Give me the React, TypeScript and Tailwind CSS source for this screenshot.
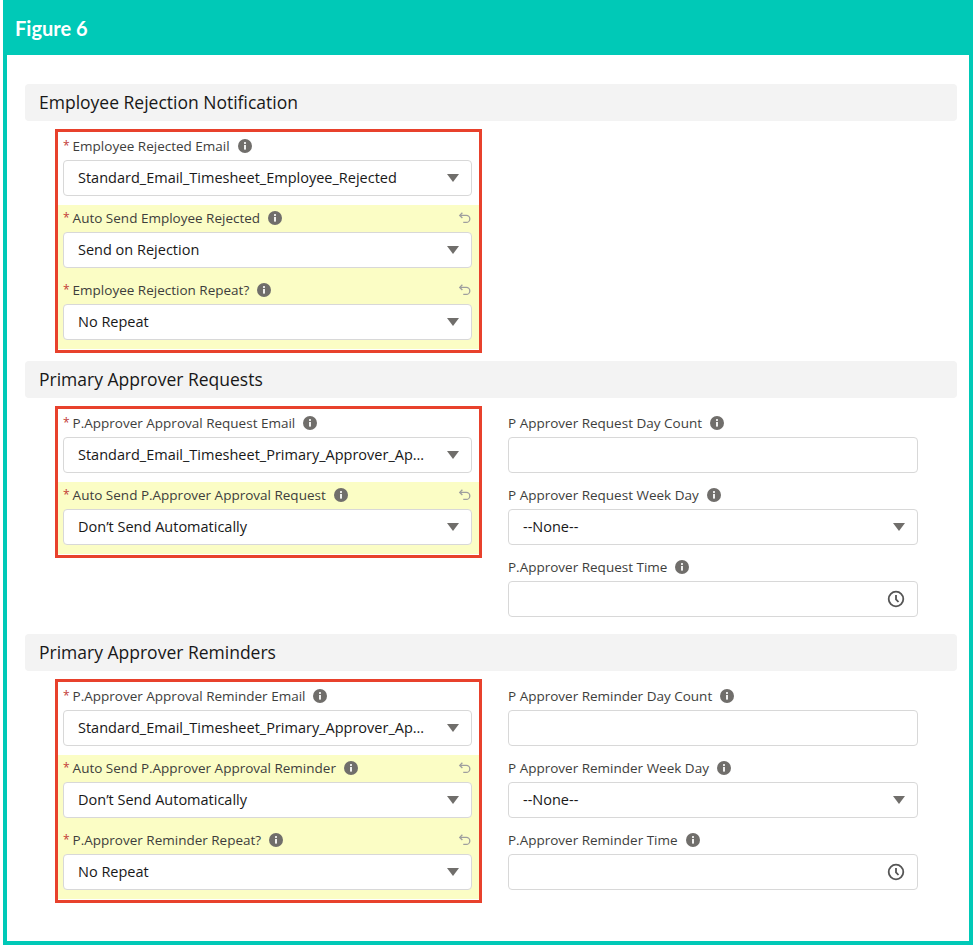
const Info = () => (
  <svg width="14" height="14" viewBox="0 0 14 14" className="ml-2 inline-block">
    <circle cx="7" cy="7" r="7" fill="#706e6b" />
    <rect x="6.1" y="6" width="1.8" height="4.6" fill="#fff" />
    <circle cx="7" cy="4.1" r="1.05" fill="#fff" />
  </svg>
)

const Undo = () => (
  <svg width="14" height="14" viewBox="0 0 16 16" fill="none" stroke="#9e9e9e" strokeWidth="1.5">
    <path d="M5 2 L2 5 L5 8" />
    <path d="M2.5 5 H9.5 a4 4 0 0 1 0 8 H6" />
  </svg>
)

const Caret = () => (
  <svg width="12" height="8" viewBox="0 0 12 8"><path d="M0 0 H12 L6 8 Z" fill="#706e6b" /></svg>
)

const Clock = () => (
  <svg width="18" height="18" viewBox="0 0 18 18" fill="none" stroke="#555" strokeWidth="1.8">
    <circle cx="9" cy="9" r="7.3" />
    <path d="M9 5 V9.3 L11.5 12" />
  </svg>
)

type F = { label: string; value?: string; req?: boolean; edited?: boolean; kind?: 'select' | 'text' | 'time' }

function Field({ f, boxed }: { f: F; boxed?: boolean }) {
  return (
    <div className={`pt-[3px] pb-[9px] ${boxed ? 'pl-[5px] pr-[7px]' : ''} ${f.edited ? 'bg-[#fbfdc5]' : ''}`}>
      <div className="flex items-center h-[20px] text-[13.5px] text-[#3e3e3c] mb-[4px]">
        {f.req && <span className="text-[#c23934] mr-[3px] text-[12px]">*</span>}
        <span>{f.label}</span>
        <Info />
        <span className="flex-1" />
        {f.edited && <Undo />}
      </div>
      <div className="h-[36px] bg-white border border-[#d8d8d8] rounded-[4px] flex items-center pl-[14px] pr-[12px] text-[14.5px] text-[#181818]">
        <span className="flex-1 truncate pr-4">{f.value}</span>
        {f.kind === 'select' && <Caret />}
        {f.kind === 'time' && <Clock />}
      </div>
    </div>
  )
}

function Section({ title, left, right }: { title: string; left: F[]; right: F[] }) {
  return (
    <div className="mb-[8px]">
      <div className="h-[37px] bg-[#f3f3f3] rounded-[4px] flex items-center pl-[14px] text-[17.5px] text-[#181818]">{title}</div>
      <div className="flex pl-[30px] pt-[8px] gap-[26px]">
        <div className="w-[427px] border-[3px] border-[#e8412c] py-[1px] self-start">
          {left.map(f => <Field key={f.label} f={f} boxed />)}
        </div>
        <div className="w-[410px] pt-[4px]">
          {right.map(f => <Field key={f.label} f={f} />)}
        </div>
      </div>
    </div>
  )
}

export default function App() {
  return (
    <div className="w-[976px] h-[950px] bg-white" style={{ fontFamily: '"Open Sans", "Liberation Sans", sans-serif' }}>
      <div className="mx-[3px] h-[945px] bg-[#00c9b7] flex flex-col">
        <div className="h-[55px] flex items-center pl-[12px] text-white font-bold text-[20px]" style={{ fontFamily: 'Lato, "Liberation Sans", sans-serif' }}>Figure 6</div>
        <div className="flex-1 mx-[4px] mb-[4px] bg-white pt-[29px] pl-[18px] pr-[12px]">
          <Section
            title="Employee Rejection Notification"
            left={[
              { label: 'Employee Rejected Email', value: 'Standard_Email_Timesheet_Employee_Rejected', req: true, kind: 'select' },
              { label: 'Auto Send Employee Rejected', value: 'Send on Rejection', req: true, edited: true, kind: 'select' },
              { label: 'Employee Rejection Repeat?', value: 'No Repeat', req: true, edited: true, kind: 'select' },
            ]}
            right={[]}
          />
          <Section
            title="Primary Approver Requests"
            left={[
              { label: 'P.Approver Approval Request Email', value: 'Standard_Email_Timesheet_Primary_Approver_Approval_Request', req: true, kind: 'select' },
              { label: 'Auto Send P.Approver Approval Request', value: 'Don’t Send Automatically', req: true, edited: true, kind: 'select' },
            ]}
            right={[
              { label: 'P Approver Request Day Count', value: '', kind: 'text' },
              { label: 'P Approver Request Week Day', value: '--None--', kind: 'select' },
              { label: 'P.Approver Request Time', value: '', kind: 'time' },
            ]}
          />
          <Section
            title="Primary Approver Reminders"
            left={[
              { label: 'P.Approver Approval Reminder Email', value: 'Standard_Email_Timesheet_Primary_Approver_Approval_Reminder', req: true, kind: 'select' },
              { label: 'Auto Send P.Approver Approval Reminder', value: 'Don’t Send Automatically', req: true, edited: true, kind: 'select' },
              { label: 'P.Approver Reminder Repeat?', value: 'No Repeat', req: true, edited: true, kind: 'select' },
            ]}
            right={[
              { label: 'P Approver Reminder Day Count', value: '', kind: 'text' },
              { label: 'P Approver Reminder Week Day', value: '--None--', kind: 'select' },
              { label: 'P.Approver Reminder Time', value: '', kind: 'time' },
            ]}
          />
        </div>
      </div>
    </div>
  )
}
